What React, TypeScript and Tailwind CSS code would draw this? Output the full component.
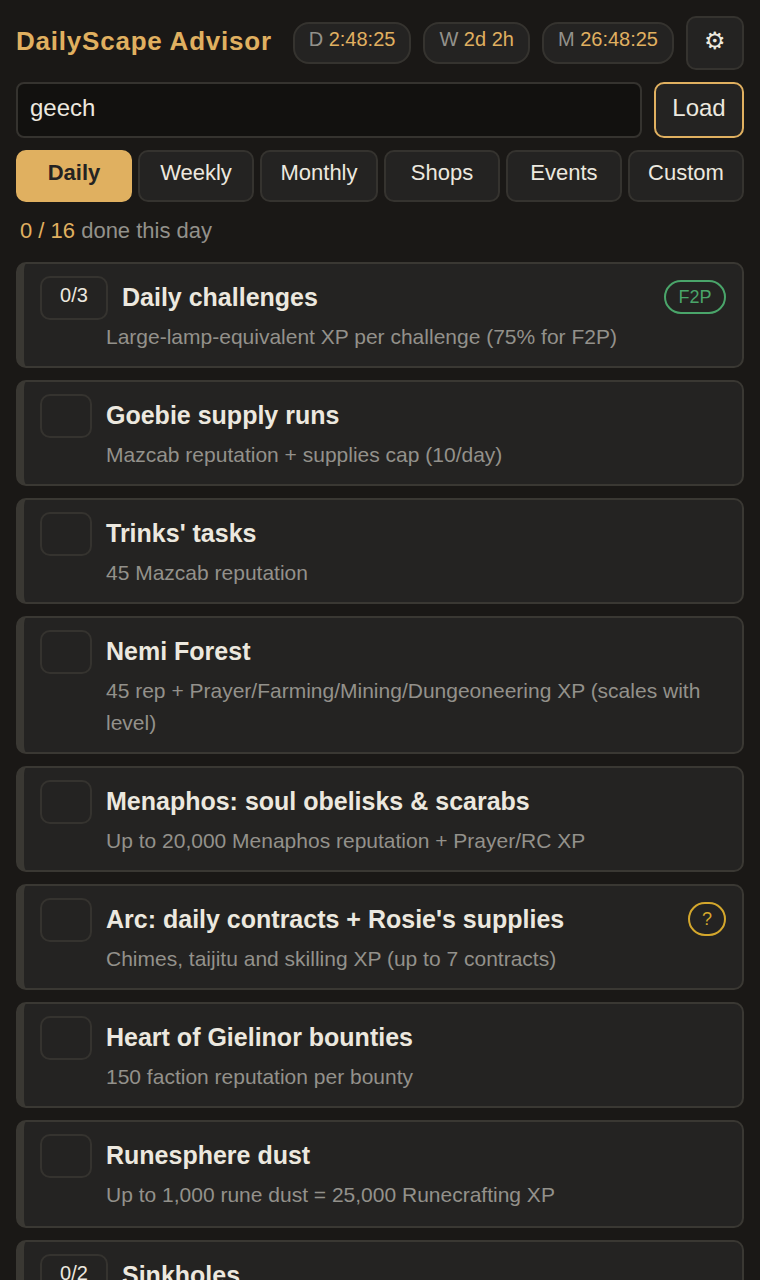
const tabs = ["Daily", "Weekly", "Monthly", "Shops", "Events", "Custom"];

type Task = {
  title: string;
  desc: string;
  count?: string;
  badge?: "f2p" | "unknown";
  tall?: boolean;
};

const tasks: Task[] = [
  { title: "Daily challenges", desc: "Large-lamp-equivalent XP per challenge (75% for F2P)", count: "0/3", badge: "f2p" },
  { title: "Goebie supply runs", desc: "Mazcab reputation + supplies cap (10/day)" },
  { title: "Trinks' tasks", desc: "45 Mazcab reputation" },
  { title: "Nemi Forest", desc: "45 rep + Prayer/Farming/Mining/Dungeoneering XP (scales with level)" },
  { title: "Menaphos: soul obelisks & scarabs", desc: "Up to 20,000 Menaphos reputation + Prayer/RC XP" },
  { title: "Arc: daily contracts + Rosie's supplies", desc: "Chimes, taijitu and skilling XP (up to 7 contracts)", badge: "unknown" },
  { title: "Heart of Gielinor bounties", desc: "150 faction reputation per bounty" },
  { title: "Runesphere dust", desc: "Up to 1,000 rune dust = 25,000 Runecrafting XP", tall: true },
  { title: "Sinkholes", desc: "Dungeoneering XP and tokens", count: "0/2" },
];

function Chip({ label, value }: { label: string; value: string }) {
  return (
    <div className="h-[42px] shrink-0 rounded-[16px] border-2 border-[#35332f] bg-[#242322] px-[14px] text-[20px] leading-[30px] whitespace-nowrap">
      <span className="text-[#93918b]">{label} </span>
      <span className="text-[#e0b060]">{value}</span>
    </div>
  );
}

function TaskCard({ task }: { task: Task }) {
  return (
    <div className={`flex gap-[14px] rounded-[10px] border-2 border-l-[8px] border-[#3a3833] bg-[#242322] pl-[16px] pr-[16px] pt-[12px] ${task.tall ? "pb-[15px]" : "pb-[13px]"}`}>
      {task.count ? (
        <div className="h-[44px] w-[68px] shrink-0 rounded-[10px] border-2 border-[#35332f] pt-[2px] text-center text-[20px] leading-[30px] text-[#ece8df]">
          {task.count}
        </div>
      ) : (
        <div className="h-[44px] w-[52px] shrink-0 rounded-[10px] border-2 border-[#35332f]" />
      )}
      <div className="min-w-0 flex-1">
        <div className="flex h-[44px] items-center justify-between">
          <div className="pb-[2px] text-[25px] font-bold leading-[30px] text-[#ece8df]">{task.title}</div>
          {task.badge === "f2p" && (
            <div className="-mt-[2px] flex h-[34px] w-[62px] items-center justify-center rounded-full border-2 border-[#4aa56a] text-[18px] text-[#4aa56a]">
              F2P
            </div>
          )}
          {task.badge === "unknown" && (
            <div className="-mt-[2px] flex h-[34px] w-[38px] items-center justify-center rounded-full border-2 border-[#d4a72c] text-[18px] text-[#d4a72c]">
              ?
            </div>
          )}
        </div>
        <div className={`mt-[1px] text-[21px] leading-[32px] text-[#93918b] ${task.count ? "-ml-[16px]" : ""}`}>{task.desc}</div>
      </div>
    </div>
  );
}

export default function App() {
  return (
    <div className="min-h-screen bg-[#1a1816] p-[16px] font-['Liberation_Sans',sans-serif] text-[#ece8df]">
      {/* Header */}
      <div className="flex items-center justify-between">
        <h1 className="whitespace-nowrap pb-[4px] text-[26px] font-bold tracking-[0.78px] text-[#e0b060]">DailyScape Advisor</h1>
        <div className="flex items-center gap-[12px]">
          <Chip label="D" value="2:48:25" />
          <Chip label="W" value="2d 2h" />
          <Chip label="M" value="26:48:25" />
          <button className="flex h-[54px] w-[58px] shrink-0 items-center justify-center rounded-[10px] border-2 border-[#35332f] bg-[#242322] pb-[4px] text-[24px] text-[#ece8df]">
            ⚙
          </button>
        </div>
      </div>

      {/* Player */}
      <div className="mt-[12px] flex gap-[12px]">
        <div className="flex h-[56px] flex-1 items-center rounded-[8px] border-2 border-[#35332f] bg-[#12110f] px-[12px] pb-[4px] text-[24px]">
          geech
        </div>
        <button className="h-[56px] w-[90px] rounded-[10px] border-2 border-[#e0b060] bg-[#242322] pb-[4px] text-[24px] text-[#ece8df]">
          Load
        </button>
      </div>

      {/* Tabs */}
      <div className="mt-[12px] flex gap-[6px]">
        {tabs.map((tab) => (
          <button
            key={tab}
            className={`h-[52px] flex-auto basis-0 rounded-[10px] border-2 pb-[8px] text-[22px] ${
              tab === "Daily"
                ? "border-[#e0b060] bg-[#e0b060] font-bold text-[#242322]"
                : "border-[#35332f] bg-[#242322] text-[#ece8df]"
            } ${tab === "Monthly" ? "min-w-[118px]" : ""}`}
          >
            {tab}
          </button>
        ))}
      </div>

      <div className="mt-[12px] px-[4px] text-[22px] leading-[34px] text-[#93918b]">
        <span className="text-[#e0b060]">0 / 16</span> done this day
      </div>

      {/* Task list */}
      <div className="mt-[14px] flex flex-col gap-[12px]">
        {tasks.map((task) => (
          <TaskCard key={task.title} task={task} />
        ))}
      </div>
    </div>
  );
}
